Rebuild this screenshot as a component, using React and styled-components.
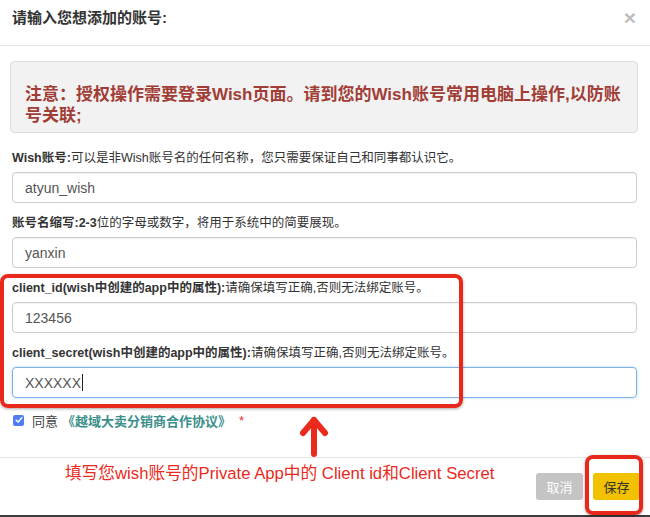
import styled, { createGlobalStyle } from "styled-components";

const GlobalStyle = createGlobalStyle`
  html, body {
    margin: 0;
    padding: 0;
    background: #fff;
  }
  body {
    font-family: "Liberation Sans", "Noto Sans CJK SC", sans-serif;
    color: #333;
  }
`;

const fields = [
  { label: "Wish账号:", hint: "可以是非Wish账号名的任何名称，您只需要保证自己和同事都认识它。", value: "atyun_wish" },
  { label: "账号名缩写:2-3", hint: "位的字母或数字，将用于系统中的简要展现。", value: "yanxin" },
  { label: "client_id(wish中创建的app中的属性):", hint: "请确保填写正确,否则无法绑定账号。", value: "123456" },
  { label: "client_secret(wish中创建的app中的属性):", hint: "请确保填写正确,否则无法绑定账号。", value: "XXXXXX", focused: true },
];

export default function App() {
  return (
    <>
      <GlobalStyle />
      <Modal>
        <Header>
          <Title>请输入您想添加的账号:</Title>
          <Close>×</Close>
        </Header>
        <Body>
          <Notice>注意：授权操作需要登录Wish页面。请到您的Wish账号常用电脑上操作,以防账号关联;</Notice>
          {fields.map((f) => (
            <Field key={f.label}>
              <Label>
                <b>{f.label}</b>
                {f.hint}
              </Label>
              <Input $focused={f.focused}>
                {f.value}
                {f.focused && <Caret />}
              </Input>
            </Field>
          ))}
          <AgreeRow>
            <Check>
              <svg width="8" height="8" viewBox="0 0 8 8">
                <path d="M1.2 4.2 L3.2 6 L6.8 1.8" fill="none" stroke="#fff" strokeWidth="1.5" strokeLinecap="round" strokeLinejoin="round" />
              </svg>
            </Check>
            <span>同意</span>
            <Agreement>《越域大卖分销商合作协议》</Agreement>
            <Star>*</Star>
          </AgreeRow>
        </Body>
        <Footer>
          <Tip>填写您wish账号的Private App中的 Client id和Client Secret</Tip>
          <Actions>
            <Button $variant="cancel">取消</Button>
            <Button $variant="save">保存</Button>
          </Actions>
        </Footer>

        <Highlight $top={274} $left={0} $w={463} $h={134} />
        <Highlight $top={455} $left={585} $w={58} $h={60} />
        <Arrow width="30" height="42" viewBox="0 0 30 42">
          <path d="M15 39 L15 5" stroke="#ea2a1c" strokeWidth="6" strokeLinecap="round" fill="none" />
          <path d="M4 18 L15 5 L26 18" stroke="#ea2a1c" strokeWidth="6" strokeLinecap="round" strokeLinejoin="round" fill="none" />
        </Arrow>
      </Modal>
    </>
  );
}

const Modal = styled.div`
  position: relative;
  width: 650px;
  height: 515px;
  background: #fff;
  border-bottom: 2px solid #3b3b3b;
  display: flex;
  flex-direction: column;
`;

const Header = styled.div`
  box-sizing: border-box;
  height: 46px;
  padding: 8px 14px 0 12px;
  display: flex;
  align-items: flex-start;
  justify-content: space-between;
  border-bottom: 1px solid #e5e5e5;
`;

const Title = styled.h4`
  margin: 0;
  font-size: 15px;
  line-height: 20px;
  font-weight: bold;
  color: #333;
`;

const Close = styled.span`
  font-size: 21px;
  font-weight: bold;
  color: #bdbdbd;
  line-height: 20px;
`;

const Body = styled.div`
  padding: 15px 13px 27px 12px;
`;

const Notice = styled.div`
  margin: 0 -1px 0 -2px;
  padding: 22px 12px 6px 14px;
  background: #f2f2f2;
  border: 1px solid #ddd;
  border-radius: 4px;
  color: #a13d35;
  font-size: 17px;
  font-weight: bold;
  line-height: 21px;
`;

const Field = styled.div`
  margin-top: 15px;
  & + & {
    margin-top: 10px;
  }
`;

const Label = styled.div`
  font-size: 12.5px;
  line-height: 20px;
  color: #333;
  margin-bottom: 4px;
  white-space: nowrap;

  b {
    font-weight: bold;
  }
`;

const Input = styled.div`
  box-sizing: border-box;
  height: 31px;
  padding: 0 12px;
  display: flex;
  align-items: center;
  font-size: 14px;
  color: #555;
  border: 1px solid ${(p) => (p.$focused ? "#7fb0e6" : "#ccc")};
  border-radius: 4px;
  box-shadow: ${(p) => (p.$focused ? "0 0 3px rgba(102,175,233,0.5)" : "inset 0 1px 1px rgba(0,0,0,0.05)")};
`;

const Caret = styled.span`
  display: inline-block;
  width: 1px;
  height: 17px;
  background: #222;
  margin-left: 1px;
`;

const AgreeRow = styled.div`
  margin-top: 12px;
  height: 20px;
  display: flex;
  align-items: center;
  font-size: 13px;
  color: #444;
  padding-left: 1px;
`;

const Check = styled.span`
  width: 11px;
  height: 11px;
  border-radius: 2px;
  background: #4f7ef2;
  display: inline-flex;
  align-items: center;
  justify-content: center;
  margin-right: 8px;
`;

const Agreement = styled.span`
  color: #3b8f8b;
  font-weight: bold;
  margin-left: 4px;
`;

const Star = styled.span`
  color: #e2372c;
  margin-left: 8px;
`;

const Footer = styled.div`
  border-top: 1px solid #e5e5e5;
  padding: 6px 10px 0 65px;
  display: flex;
  justify-content: space-between;
  align-items: flex-start;
`;

const Tip = styled.div`
  color: #ea2a1c;
  font-size: 16.7px;
  line-height: 20px;
`;

const Actions = styled.div`
  margin-top: 9px;
  display: flex;
  gap: 10px;
`;

const Button = styled.div`
  width: 47px;
  height: 27px;
  border-radius: 3px;
  display: flex;
  align-items: center;
  justify-content: center;
  font-size: 13px;
  background: ${(p) => (p.$variant === "save" ? "#f2c100" : "#c4c4c4")};
  color: ${(p) => (p.$variant === "save" ? "#333" : "#fff")};
`;

const Highlight = styled.div`
  position: absolute;
  top: ${(p) => p.$top}px;
  left: ${(p) => p.$left}px;
  width: ${(p) => p.$w}px;
  height: ${(p) => p.$h}px;
  box-sizing: border-box;
  border: 4px solid #e8281b;
  border-radius: 8px;
  box-shadow: 0 1px 3px rgba(0, 0, 0, 0.35);
  pointer-events: none;
`;

const Arrow = styled.svg`
  position: absolute;
  left: 299px;
  top: 415px;
`;
